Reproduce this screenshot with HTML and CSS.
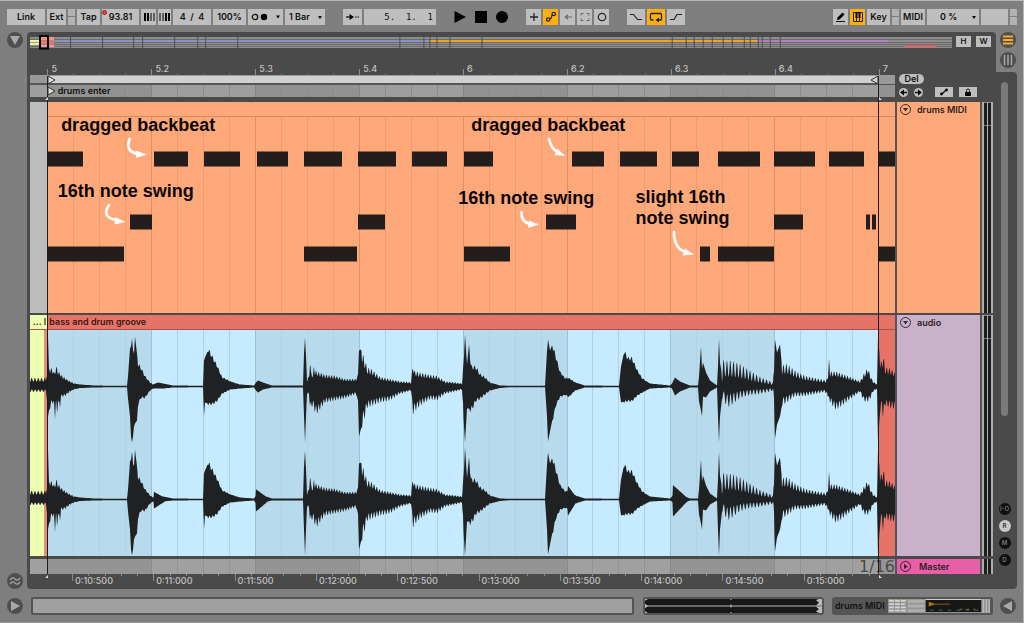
FILE: index.html
```
<!DOCTYPE html>
<html lang="en">
<head>
<meta charset="utf-8">
<title>Arrangement</title>
<link rel="stylesheet" href="styles.css">
</head>
<body>
<header class="toolbar">
  <div class="group">
    <button class="btn w-link">Link</button>
    <button class="btn w-ext">Ext</button>
    <span class="split"><i></i><i></i></span>
    <button class="btn w-tap">Tap</button>
    <span class="tempo"><input class="field" aria-label="Tempo" value="93.81"><i class="dot"></i></span>
    <button class="btn w-nudge" aria-label="Nudge down"><svg width="12" height="10"><path d="M1 1h2v8H1zM4 1h2v8H4zM7.500 1h1v8h-1zM10.500 1h1v8h-1z"/></svg></button>
    <button class="btn w-nudge2" aria-label="Nudge up"><svg width="12" height="10"><path d="M.5 1h1v8h-1zM3.500 1h1v8h-1zM6 1h2v8H6zM9 1h2v8H9z"/></svg></button>
    <button class="btn w-sig">4&nbsp; /&nbsp; 4</button>
    <button class="btn w-groove">100%</button>
    <button class="btn w-metro" aria-label="Metronome"><svg width="32" height="10"><circle cx="5" cy="5" r="2.700" fill="none" stroke="#111" stroke-width="1.200"/><circle cx="14" cy="5" r="3.200"/><path d="M26 3.500h4l-2 3z"/></svg></button>
    <span class="pick w-bar"><select aria-label="Quantization"><option>1 Bar</option></select><svg width="4" height="3"><path d="M0 0h4L2 3z"/></svg></span>
  </div>
  <div class="group">
    <button class="btn w-follow" aria-label="Follow"><svg width="14" height="10"><path d="M0 5h7" stroke="#111" stroke-width="1.300"/><path d="M3.500 2L8 5 3.500 8z"/><path d="M9 5h5" stroke="#111" stroke-dasharray="1.500 1" stroke-width="1.200"/></svg></button>
    <input class="field position" aria-label="Position" value="5. &nbsp;1. &nbsp;1">
  </div>
  <div class="group transport">
    <button class="bare" aria-label="Play"><svg width="12" height="14"><path d="M.5 1L12 7 .5 13z"/></svg></button>
    <button class="bare" aria-label="Stop"><svg width="12" height="14"><path d="M0 1h12v12H0z"/></svg></button>
    <button class="bare" aria-label="Record"><svg width="12" height="14"><circle cx="6" cy="7" r="6"/></svg></button>
  </div>
  <div class="group">
    <button class="btn w-icon" aria-label="Overdub"><svg width="10" height="10"><path d="M5 1v8M1 5h8" stroke="#222" stroke-width="1.300"/></svg></button>
    <button class="btn w-icon on" aria-label="Automation arm"><svg width="12" height="12" fill="none" stroke="#222" stroke-width="1.200"><circle cx="3.200" cy="8.500" r="1.700"/><circle cx="8.700" cy="3" r="1.700"/><path d="M4.500 7.500Q6 8.500 6.500 6T7.500 4.500"/></svg></button>
    <button class="btn w-icon" aria-label="Re-enable automation"><svg width="10" height="10"><path d="M3 5h6" stroke="#777" stroke-width="1.200"/><path d="M1 5l4-3v6z" fill="#777"/></svg></button>
    <button class="btn w-icon" aria-label="Capture"><svg width="10" height="10" fill="none" stroke="#666"><path d="M1 3.500v-2h2.500M6.500 1.500H9v2M9 6.500v2H6.500M3.500 8.500H1v-2"/></svg></button>
    <button class="btn w-icon" aria-label="Session record"><svg width="10" height="10"><circle cx="5" cy="5" r="3.700" fill="none" stroke="#222" stroke-width="1.200"/></svg></button>
  </div>
  <div class="group punches">
    <button class="btn w-punch" aria-label="Punch in"><svg width="14" height="10" fill="none" stroke="#222" stroke-width="1.200"><path d="M1 2.500h3.500l4 5H13"/></svg></button>
    <button class="btn w-punch on" aria-label="Loop"><svg width="14" height="12" fill="none" stroke="#222" stroke-width="1.300"><path d="M4.500 9H2.500q-1 0-1-1V3.500q0-1 1-1h9q1 0 1 1V8q0 1-1 1H9"/><path d="M10 6.500v5L6.500 9z" fill="#222" stroke="none"/></svg></button>
    <button class="btn w-punch" aria-label="Punch out"><svg width="14" height="10" fill="none" stroke="#222" stroke-width="1.200"><path d="M1 7.500h4l3-5h5"/></svg></button>
  </div>
  <div class="group last">
    <button class="btn w-icon" aria-label="Draw mode"><svg width="12" height="12"><path d="M2.500 6.500L7.500 1.500l2 2-5 5-2.500.5z"/><path d="M1 10.500h9" stroke="#111"/></svg></button>
    <button class="btn w-icon on" aria-label="Computer MIDI keyboard"><svg width="12" height="12"><path d="M1.500 1.500h9v9h-9zM4.500 6v4.500M7.500 6v4.500" fill="none" stroke="#222"/><path d="M3.500 1h2v6h-2zM6.500 1h2v6h-2z"/></svg></button>
    <button class="btn w-key">Key</button>
    <span class="split"><i></i><i></i></span>
    <button class="btn w-midi">MIDI</button>
    <span class="pick w-cpu"><select aria-label="CPU load"><option>0 %</option></select><svg width="4" height="3"><path d="M0 0h4L2 3z"/></svg></span>
    <span class="btn w-disk"></span>
    <span class="split"><i></i><i></i></span>
  </div>
</header>

<main class="workspace">
  <div class="gutter">
    <button class="round" aria-label="Browser"><svg width="10" height="10"><path d="M0 1h10L5 10z"/></svg></button>
    <button class="round" aria-label="Groove pool"><svg width="12" height="10" fill="none" stroke="#a0a0a0" stroke-width="1.300"><path d="M1 4q2.500-3.500 5-1t5-1M1 8q2.500-3.500 5-1t5-1"/></svg></button>
  </div>

  <section class="panel">
    <div class="overview-row">
      <svg class="overview" id="overview" viewBox="0 0 921 13" preserveAspectRatio="none"></svg>
      <button class="mini">H</button>
      <button class="mini">W</button>
    </div>

    <div class="row ruler-row">
      <div class="ruler" id="ruler"></div>
      <div class="tail"></div>
    </div>

    <div class="arrange">
      <div class="row locator-rows">
        <div class="lane">
          <div class="loop"><svg class="loop-bar" viewBox="0 0 865 9" preserveAspectRatio="none"><path d="M0 0h865v9H0z" fill="#999"/><path d="M18 1h831v7H18z" fill="#d0d0d0"/><path d="M0 8.500h849" stroke="#555"/></svg></div>
          <div class="locators"><svg class="fill" id="locgrid" viewBox="0 0 865 13" preserveAspectRatio="none"></svg><span class="locator-name">drums enter</span></div>
        </div>
        <div class="controls">
          <button class="pill">Del</button>
          <div class="ctl-line">
            <button class="tiny-round" aria-label="Previous locator"><svg width="9" height="9"><path d="M4 4.500h4" stroke="#111" stroke-width="1.500"/><path d="M1 4.500L5 1.500v6z"/></svg></button>
            <button class="tiny-round" aria-label="Next locator"><svg width="9" height="9"><path d="M1 4.500h4" stroke="#111" stroke-width="1.500"/><path d="M8 4.500L4 1.500v6z"/></svg></button>
            <button class="chip" aria-label="Automation mode"><svg width="10" height="8"><path d="M3 6l4-4" stroke="#111" stroke-width="1.200"/><circle cx="2.500" cy="6" r="1.400"/><circle cx="7.500" cy="2" r="1.400"/></svg></button>
            <button class="chip" aria-label="Lock envelopes"><svg width="8" height="9"><path d="M1 4h6v4H1z"/><path d="M2.500 4V2.500a1.500 1.500 0 0 1 3 0V4" fill="none" stroke="#111"/></svg></button>
          </div>
        </div>
      </div>

      <div class="row midi-row">
        <div class="lane">
          <svg class="fill" id="notes" viewBox="0 0 865 211" preserveAspectRatio="none"></svg>
          <span class="note-text t1">dragged backbeat</span>
          <span class="note-text t2">16th note swing</span>
          <span class="note-text t3">dragged backbeat</span>
          <span class="note-text t4">16th note swing</span>
          <span class="note-text t5">slight 16th<br>note swing</span>
        </div>
        <div class="track orange"><button class="fold" aria-label="Fold drums MIDI"><svg width="13" height="13"><circle cx="6.500" cy="6.500" r="5" fill="none" stroke="#3a2a24"/><path d="M4 5h5L6.500 8.500z" fill="#3a2a24"/></svg></button><span>drums MIDI</span></div>
        <div class="meter"><i></i><i></i></div>
      </div>

      <div class="row audio-row">
        <div class="lane">
          <div class="clip-head"><span class="clip-prev">... l</span><span class="clip-name">bass and drum groove</span></div>
          <svg class="wave" id="wave" viewBox="0 0 865 226" preserveAspectRatio="none"></svg>
        </div>
        <div class="track mauve"><button class="fold" aria-label="Fold audio"><svg width="13" height="13"><circle cx="6.500" cy="6.500" r="5" fill="none" stroke="#332d36"/><path d="M4 5h5L6.500 8.500z" fill="#332d36"/></svg></button><span>audio</span></div>
        <div class="meter"><i></i><i></i></div>
      </div>

      <div class="row master-row">
        <div class="lane"><svg class="fill" id="mastergrid" viewBox="0 0 865 15" preserveAspectRatio="none"></svg><span class="grid-size">1/16</span></div>
        <div class="track pink"><button class="fold" aria-label="Unfold Master"><svg width="13" height="13"><circle cx="6.500" cy="6.500" r="5" fill="none" stroke="#401a2e"/><path d="M5 4l4 2.500L5 9z" fill="#401a2e"/></svg></button><span>Master</span></div>
        <div class="meter"><i></i><i></i></div>
      </div>

      <svg class="markers" viewBox="0 0 865 499" preserveAspectRatio="none">
        <path d="M17.500 1V499M848.500 1V499" stroke="#1c1c1c" fill="none"/>
        <path d="M18 1l7 4-7 4zM18 12l7 4-7 4z" fill="#ddd" stroke="#333"/>
        <path d="M848 1l-7 4 7 4z" fill="#d0d0d0" stroke="#333"/>
        <path d="M18 22l-3 3h3zM849 22l3 3h-3zM18 500l-3 3h3zM849 500l3 3h-3z" fill="#cfe6f2"/>
      </svg>
    </div>

    <div class="row time-row">
      <div class="time" id="time"></div>
      <div class="tail"></div>
    </div>
  </section>

  <aside class="side">
    <div class="views">
      <button class="round" aria-label="Arrangement view"><svg width="10" height="10"><path d="M0 1.500h10M0 5h10M0 8.500h10" stroke="#ffac1c" stroke-width="2"/></svg></button>
      <button class="round" aria-label="Session view"><svg width="10" height="10"><path d="M1.500 0v10M5 0v10M8.500 0v10" stroke="#a5a5a5" stroke-width="1.500"/></svg></button>
    </div>
    <div class="side-panel">
      <div class="scroll"></div>
      <div class="toggles">
        <button class="toggle">I-O</button>
        <button class="toggle lit">R</button>
        <button class="toggle">M</button>
        <button class="toggle">D</button>
      </div>
    </div>
  </aside>
</main>

<footer class="bottom">
  <button class="round" aria-label="Info view"><svg width="10" height="10"><path d="M1 0l9 5-9 5z"/></svg></button>
  <div class="info"></div>
  <div class="clip-view"><svg class="mini-wave" viewBox="0 0 175 15" preserveAspectRatio="none"><path d="M0 0h175v15H0z" fill="#181818"/><path d="M0 7.500h175" stroke="#b9b9b9"/><path d="M0 0h3l-3 2zM0 5l3 2.500-3 2.500zM0 13l3 2H0zM175 0h-3l-3 1 3 3-3 3h6zM175 8h-6l3 3-3 2 3 2h3z" fill="#bbb"/><path d="M85 0v1M85 14v1M85 6v3" stroke="#ccc"/></svg></div>
  <div class="device-view"><span>drums MIDI</span>
    <svg class="mini-device" viewBox="0 0 103 15" preserveAspectRatio="none">
      <path d="M0 0h103v15H0z" fill="#949494"/>
      <path d="M1 2h18M1 5.500h16M1 9h18M1 12.500h17" stroke="#d2d2d2" stroke-width="2" stroke-dasharray="5 1"/>
      <path d="M20 1h17v3H20zM20 6h17v3H20zM20 11h17v3H20z" fill="#aeaeae"/>
      <path d="M1 .5h36M20 5h10" stroke="#c3a36a" stroke-dasharray="2 4"/>
      <path d="M38 1h56v13H38z" fill="#171715"/><path d="M38 .5h56" stroke="#cfd6da"/>
      <path d="M41 3l6 2h15v1H47l-6 2z" fill="#a07a1c"/><path d="M42 12h50" stroke="#3d6670" stroke-dasharray="4 5"/><path d="M72 11h16" stroke="#8c7020" stroke-dasharray="3 4"/>
      <path d="M96 0v15M99 0v15M102 0v15" stroke="#c6c6c6"/>
    </svg>
  </div>
  <button class="round" aria-label="Device view"><svg width="10" height="10"><path d="M9 0L0 5l9 5z"/></svg></button>
</footer>
<script src="script.js"></script>
</body>
</html>
```

FILE: styles.css
```
* { box-sizing: border-box; }
body {
  margin: 0; min-height: 100vh; display: flex; flex-direction: column;
  background: #7f7f7f; color: #111;
  font: 600 9px/12px Inter, "Liberation Sans", sans-serif;
  border-top: 1px solid #b4b8b5; border-right: 1px solid #b4b8b5; border-bottom: 1px solid #979797;
}
button, input, select { font: inherit; color: inherit; border: 0; margin: 0; padding: 0; border-radius: 0; background: none; }
svg { display: block; }
i { font-style: normal; }

.toolbar { display: flex; align-items: center; gap: 18px; height: 31px; padding: 0 6px 0 7px; }
.group { display: flex; gap: 2px; align-items: center; }
.last { margin-left: auto; }
.transport { gap: 9px; }
.bare { display: flex; }
.btn, .field, .pick { height: 16px; background: #bebebe; display: flex; align-items: center; justify-content: center; white-space: nowrap; }
.field { text-align: center; }
.on { background: #ffb00f; }
.split { display: flex; flex-direction: column; gap: 1px; width: 7px; height: 16px; }
.split i { flex: 1; background: #b2b2b2; }
.tempo { position: relative; width: 37px; }
.tempo .field { width: 100%; }
.dot { position: absolute; left: 0; top: 1px; width: 5px; height: 5px; border-radius: 50%; background: #e8432c; border: 1px solid #7a2a20; }
.pick { position: relative; }
.pick select { appearance: none; width: 100%; height: 100%; padding-left: 4px; }
.pick svg { position: absolute; right: 3px; top: 7px; pointer-events: none; }
.w-link { width: 38px; } .w-ext { width: 19px; } .w-tap { width: 23px; }
.w-nudge { width: 15px; } .w-nudge2 { width: 13px; } .w-sig { width: 38px; }
.w-groove { width: 33px; } .w-metro { width: 35px; } .w-bar { width: 40px; }
.w-follow { width: 19px; }
.position { width: 72px; text-align: right; padding-right: 3px; font-family: "DejaVu Sans Mono", monospace; font-weight: 400; }
.w-icon { width: 15px; } .w-punch { width: 18px; } .w-key { width: 23px; }
.w-midi { width: 24px; } .w-cpu { width: 52px; } .w-disk { width: 27px; }
.w-cpu select { padding-left: 13px; }

.workspace { flex: 1; display: flex; min-height: 0; }
.gutter { width: 27px; display: flex; flex-direction: column; justify-content: space-between; padding-left: 7px; }
.round { width: 16px; height: 16px; flex: none; border-radius: 50%; background: #4f4f4f; display: flex; align-items: center; justify-content: center; fill: #a8a8a8; }

.panel { flex: 1; min-width: 0; display: flex; flex-direction: column; background: #4a4a4a; border-radius: 4px 4px 0 4px; padding: 0 3px; }
.overview-row { display: flex; gap: 4px; height: 18px; padding: 4px 2px 0 0; }
.overview { flex: 1; min-width: 0; height: 13px; overflow: visible; }
.mini { width: 15px; height: 11px; line-height: 11px; background: #bebebe; font-size: 8px; }
.mini + .mini { margin-left: 1px; }

.row { display: flex; gap: 2px; }
.lane, .ruler, .time { flex: 1; min-width: 0; position: relative; }
.tail, .controls { width: 96px; }
.ruler-row { height: 25px; }
.tick { position: absolute; background: #8a8a8a; width: 1px; }
.ruler .tick { bottom: 0; height: 6px; }
.ruler .tick.small { height: 2px; background: #6e6e6e; }
.tick-label { position: absolute; color: #c2c2c2; font-weight: 500; white-space: nowrap; }
.ruler .tick-label { bottom: 0; padding-left: 4px; }

.arrange { flex: 1; display: flex; flex-direction: column; position: relative; }
.markers { position: absolute; left: 0; top: 0; width: calc(100% - 98px); height: 100%; overflow: visible; pointer-events: none; z-index: 1; }
.fill { position: absolute; left: 0; top: 0; width: 100%; height: 100%; }
.locator-rows { height: 27px; }
.loop { height: 9px; }
.loop-bar { width: 100%; height: 9px; }
.locators { position: relative; height: 13px; border-top: 1px solid #555; }
.locator-name { position: absolute; left: 3.2%; top: 0; }
.controls { height: 24px; padding-left: 2px; }
.pill { display: block; width: 25px; height: 10px; line-height: 10px; border-radius: 5px; background: #bebebe; margin-top: -1px; }
.ctl-line { display: flex; align-items: center; margin-top: 3px; }
.tiny-round { width: 9px; height: 9px; border-radius: 50%; background: #bebebe; margin-right: 6px; }
.chip { width: 18px; height: 10px; background: #bebebe; display: flex; align-items: center; justify-content: center; margin-left: 6px; }

.midi-row { flex: 211 1 211px; }
.audio-row { flex: 241 1 241px; margin-top: 2px; }
.audio-row .lane { display: flex; flex-direction: column; }
.master-row { height: 15px; margin-top: 3px; }
.midi-row, .audio-row, .master-row { background: #555; }
.track { width: 83px; display: flex; align-items: flex-start; gap: 5px; padding: 1px 0 0 2px; line-height: 14px; color: #2b211f; }
.fold { display: flex; }
.orange { background: #ffa97b; } .mauve { background: #c9b1c9; } .pink { background: #e85fa9; }
.master-row .track { gap: 7px; }
.meter { width: 11px; background: #adadad; display: flex; gap: 1px; padding: 0 2px; }
.meter i { flex: 1; background: #1d1d1d; }
.midi-row .meter i, .audio-row .meter i { border-top: 1px solid #888; background: linear-gradient(#1d1d1d 22px, #777 22px, #777 23px, #1d1d1d 23px); }

.note-text { position: absolute; font: bold 18px/21px "Liberation Sans", Arial, sans-serif; color: #0a0504; white-space: nowrap; }
.t1 { left: 3.6%; top: 13px; }
.t2 { left: 3.2%; top: 79px; }
.t3 { left: 51%; top: 13px; }
.t4 { left: 49.5%; top: 86px; }
.t5 { left: 70%; top: 85px; }

.clip-head { display: flex; height: 15px; line-height: 14px; background: #e57368; border-bottom: 1px solid #a85049; color: #3c1714; white-space: nowrap; }
.clip-prev { width: 2%; overflow: hidden; background: #ecffb0; padding-left: 3px; }
.clip-name { padding-left: 2px; }
.wave { width: 100%; flex: 1; min-height: 0; }
.grid-size { position: absolute; right: 0; top: 0; font: 16px/15px "DejaVu Sans", sans-serif; color: #4a4a4a; }

.time-row { height: 15px; }
.time .tick { top: 0; height: 7px; }
.time .tick.small { height: 2px; }
.time .tick-label { top: 1px; padding-left: 3px; }

.side { width: 27px; display: flex; flex-direction: column; padding-right: 6px; }
.views { height: 40px; padding-left: 4px; display: flex; flex-direction: column; gap: 4px; }
.side-panel { flex: 1; background: #4a4a4a; border-radius: 0 4px 4px 0; display: flex; flex-direction: column; align-items: center; justify-content: space-between; padding: 10px 4px 23px 0; }
.scroll { width: 7px; flex: 0 0 69%; margin-bottom: 16px; border-radius: 4px; background: #7a7a7a; }
.toggles { display: flex; flex-direction: column; gap: 5px; }
.toggle { width: 12px; height: 12px; line-height: 12px; border-radius: 50%; background: #111; color: #777; font-size: 6px; }
.toggle.lit { background: #c8c8c8; color: #333; }

.bottom { display: flex; align-items: center; height: 33px; padding: 0 7px; }
.info { flex: 1; height: 18px; margin-left: 8px; margin-right: 9px; background: #a0a0a0; border: 2px solid #555; border-radius: 2px; }
.clip-view { width: 181px; height: 18px; background: #555; border-radius: 3px; padding: 2px; margin-right: 8px; }
.mini-wave { width: 100%; height: 14px; }
.device-view { width: 161px; height: 18px; background: #555; border-radius: 3px; padding: 2px 3px; margin-right: 7px; display: flex; align-items: center; gap: 3px; white-space: nowrap; }
.mini-device { flex: 1; min-width: 0; height: 14px; }
```

FILE: script.js
```
const LEFT = 30, WIDTH = 865, BEAT = 103.9, START = 47.5;
const el = id => document.getElementById(id);
const rect = (x, y, w, h, f) => `<rect x="${x}" y="${y}" width="${w}" height="${h}" fill="${f}"/>`;
const pct = x => ((x - LEFT) / WIDTH * 100).toFixed(3) + '%';

// Alternating beat shading with sixteenth lines
function grid(h, dark, light, line, strong) {
  let s = rect(0, 0, 18, h, light);
  for (let b = 0; b < 9; b++) {
    const x = Math.floor(START - LEFT + b * BEAT);
    s += rect(x, 0, Math.min(BEAT + 1, WIDTH - x), h, b % 2 ? light : dark);
  }
  for (let q = 0; q < 33; q++) s += rect(Math.floor(START - LEFT + q * BEAT / 4), 0, 1, h, q % 4 ? line : strong);
  return s;
}
el('locgrid').innerHTML = grid(13, '#929292', '#9e9e9e', '#8c8c8c', '#858585');
el('mastergrid').innerHTML = grid(15, '#949494', '#a0a0a0', '#929292', '#8a8a8a');

// MIDI lane
let m = rect(0, 0, 865, 211, '#ffa97b') + rect(0, 0, 17, 211, '#bdbdbd');
for (let q = 0; q < 33; q++) m += rect(Math.floor(START - LEFT + q * BEAT / 4), 15, 1, 196, q % 4 ? '#ec9b71' : '#d98f69');
m += rect(17, 14, 848, 1, '#d08a66');
const rows = [
  [50, [[48,83],[154,188],[204,240],[257,288],[304,342],[358,396],[412,447],[464,493],[572,604],[620,657],[672,699],[718,760],[774,815],[829,864],[879,895]]],
  [113, [[130,152],[358,385],[546,576],[774,803],[866,870],[872,876]]],
  [145, [[48,124],[304,357],[464,510],[700,710],[718,774],[879,895]]]
];
rows.forEach(([y, ns]) => ns.forEach(([a, b]) => m += rect(a - 30, y - .5, b - a, 15, '#231d1b')));
const arrows = [
  ['M129.500 139Q125 152 138 154', 'M135.500 150.500L147 154.500 136 158z'],
  ['M109 205Q101 217 116 220', 'M115 217L125.500 222 114.500 224.500z'],
  ['M549 139Q551 149 558 152', 'M557.500 149L565.500 156 554.500 155z'],
  ['M521.500 212Q521 222 530 224', 'M529 220.500L539 224.500 528 228z'],
  ['M674 232Q674 249 686 252', 'M685 248.500L694 254.500 682.500 255.500z']
];
m += '<g transform="translate(-30 -102)">' + arrows.map(([a, b]) => `<path d="${a}" fill="none" stroke="#fff" stroke-width="2.700" stroke-linecap="round"/><path d="${b}" fill="#fff"/>`).join('') + '</g>';
el('notes').innerHTML = m;

// Waveform envelope: x, upper level, lower level
const env = [[30,8,5],[46,8,5],[47,10,14],[48,50,30],[49,17,24],[52,17,15],[54,13,18],[55,15,30],[56,17,15],[57,19,28],[58,14,15],[60,13,20],[61,11,10],[65,8,9],[70,5,5],[74,3,3],[80,2,1.5],[95,1,1],[110,.7,.7],[127,.7,.7],[128,10,12],[130,38,30],[131,40,50],[132,48,56],[133,36,50],[134,33,40],[135,50,37],[137,33,34],[138,22,18],[141,18,11],[145,10,11],[150,4,4],[153,2,2],[158,4,2],[163,3,2],[173,1,1],[203,.7,.7],[204,26,30],[205,29,16],[208,36,17],[212,29,17],[217,20,14],[222,9,7],[230,5,3],[240,2,2],[254,1,1],[256,4,4],[258,6,6],[263,4,3],[272,1,1],[303,1,1],[304,33,30],[305,49,56],[306,30,30],[307,6,7],[309,10,8],[310,26,20],[311,14,20],[313,11,18],[314,20,20],[315,15,24],[317,14,25],[325,11,15],[335,10,13],[345,7,11],[356,7,7],[358,12,14],[359,36,50],[361,37,42],[363,30,35],[365,25,28],[367,18,20],[372,16,18],[380,9,15],[390,7,13],[400,5,7],[411,4,4],[413,23,26],[414,15,24],[420,13,18],[430,11,12],[437,10,13],[445,5,7],[462,3,3],[464,30,40],[465,52,56],[467,22,22],[469,42,22],[471,20,24],[476,19,14],[480,12,12],[485,9,8],[490,4,4],[500,1,1.5],[510,.7,.7],[545,.7,.7],[547,35,30],[548,47,55],[550,36,45],[552,41,35],[556,28,18],[560,14,10],[565,8,8],[569,8,10],[575,4,4],[585,1,1],[619,.7,.7],[621,20,16],[624,34,15],[628,27,14],[632,27,14],[637,16,9],[642,8,6],[650,3,2],[670,1,1],[672,3,2],[675,9,9],[680,5,5],[690,1,1],[698,1,1],[699,10,15],[701,40,24],[702,18,30],[703,24,10],[706,14,11],[710,6,5],[717,1,1],[718,20,30],[719,48,56],[720,24,30],[722,12,12],[723,25,10],[727,24,20],[732,24,17],[740,21,11],[750,15,8],[760,9,7],[773,4,4],[774,20,20],[775,47,52],[777,34,38],[780,42,30],[782,20,18],[787,21,15],[795,15,9],[805,10,9],[815,8,7],[825,6,5],[828,8,10],[829,28,10],[830,14,15],[836,14,22],[842,12,18],[850,9,12],[860,5,5],[864,12,14],[868,18,14],[870,11,12],[873,5,5],[877,2,2],[878,50,56],[880,26,25],[882,22,18],[883,32,30],[885,18,18],[890,17,20],[895,13,21]];
const combs = [[30,46,.5,3.3],[50,75,.3,2.6],[138,153,.2,3],[208,236,.15,3],[307,357,.35,2.6],[362,463,.4,2.7],[470,492,.25,3],[553,580,.15,3],[624,645,.15,3],[722,774,.72,3.3],[782,827,.5,2.9],[830,876,.4,2.7],[880,895,.4,2.7]];
// Stronger hits of the lower channel: x, length, level
const extra = [[154,14,9],[256,14,12],[568,10,16],[673,16,17]];
function level(x, k) {
  let i = 1;
  while (i < env.length - 1 && env[i][0] < x) i++;
  const a = env[i - 1], b = env[i], t = (x - a[0]) / (b[0] - a[0]);
  let v = a[k] + (b[k] - a[k]) * t;
  const c = combs.find(c => x >= c[0] && x <= c[1]);
  if (c) v *= 1.1 - c[2] * (.5 + .5 * Math.cos(2 * Math.PI * (x - c[0] + (k - 1) * 1.4) / c[3]));
  return Math.max(v, .6);
}
function channel(mid, second) {
  const up = [], down = [];
  for (let x = 30; x <= 895; x += .5) {
    let u = level(x, 1), d = level(x, 2);
    if (second) extra.forEach(([s, n, l]) => {
      if (x >= s && x <= s + n) { const e = l * (1 - (x - s) / n); u = Math.max(u, e * .85); d = Math.max(d, e); }
    });
    up.push(`${x - 30} ${(mid - u).toFixed(1)}`);
    down.unshift(`${x - 30} ${(mid + d).toFixed(1)}`);
  }
  return `<path d="M${up.join('L')}L${down.join('L')}z" fill="#1f2122"/>`;
}
el('wave').innerHTML = grid(226, '#b8daed', '#c6eaff', '#b0d2e4', '#9fc0d2')
  + rect(0, 0, 14, 226, '#ecffb0') + rect(14, 0, 4, 226, '#dd9075') + rect(849, 0, 16, 226, '#e57368')
  + channel(56.5, false) + channel(169.5, true);

// Beat-time ruler
let r = '';
['5','5.2','5.3','5.4','6','6.2','6.3','6.4','7'].forEach((t, i) => {
  const x = pct(START + i * BEAT);
  r += `<i class="tick" style="left:${x}"></i><span class="tick-label" style="left:${x}">${t}</span>`;
  if (i < 8) for (let q = 1; q < 4; q++) r += `<i class="tick small" style="left:${pct(START + (i + q / 4) * BEAT)}"></i>`;
});
el('ruler').innerHTML = r;

// Clock-time ruler
let c = '';
for (let i = 0; i < 10; i++) {
  const ms = 10500 + i * 500, x0 = 72 + i * 81.3;
  const t = `0:${Math.floor(ms / 1000)}:${ms % 1000 ? '500' : '000'}`;
  c += `<i class="tick" style="left:${pct(x0)}"></i><span class="tick-label" style="left:${pct(x0)}">${t}</span>`;
  for (let q = 1; q < 5; q++) c += `<i class="tick small" style="left:${pct(x0 + q * 16.26)}"></i>`;
}
el('time').innerHTML = c;

// Song overview
let o = rect(0, 1, 921, 11, '#8d8d8d');
[3, 6, 8, 10].forEach(y => o += rect(0, y, 921, 1, '#6c6c6c'));
o += rect(24, 4, 375, 2, '#8494c8') + rect(399, 4, 328, 2, '#f5a21c') + rect(727, 4, 131, 2, '#b67cc8')
  + rect(874, 9, 32, 2, '#e0605a')
  + rect(0, 4, 9, 5, '#e8f5a0') + rect(9, 1, 15, 3, '#f09a70') + rect(9, 4, 15, 5, '#e5706a') + rect(9, 9, 15, 2, '#d9a0b8')
  + rect(0, 6, 24, 1, '#a8a080');
[40,72,103,112,144,167,175,207,369,393,399,406,419,451,641,655,663,672,681,692,701,713,719,727,731,739,749].forEach(x => o += rect(x, 1, 1, 11, '#4e4e4e'));
o += '<rect x="10" y="0" width="8" height="12.500" fill="none" stroke="#000" stroke-width="2"/>';
el('overview').innerHTML = o;
```
